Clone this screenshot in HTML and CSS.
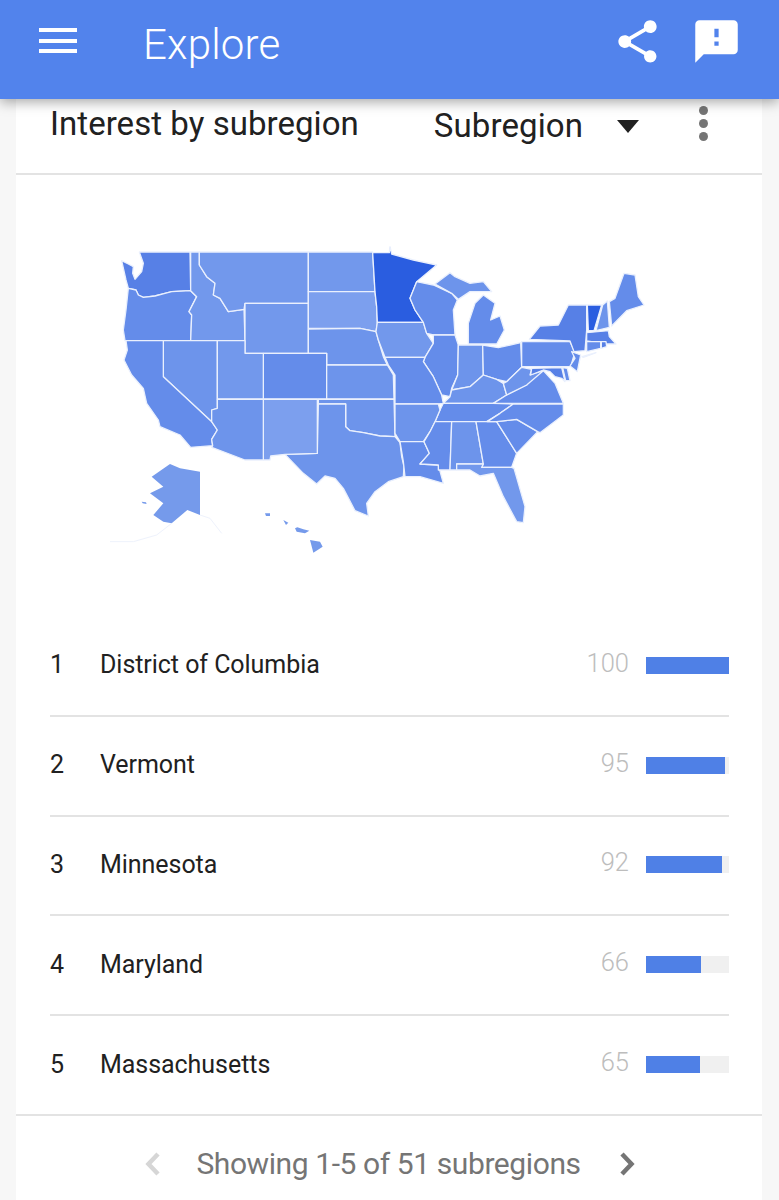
FILE: index.html
```html
<!DOCTYPE html>
<html lang="en">
<head>
<meta charset="utf-8">
<title>Explore</title>
<link rel="stylesheet" href="styles.css">
</head>
<body>
<header class="appbar">
  <button class="menu" aria-label="Menu"><span></span><span></span><span></span></button>
  <h1 class="appbar-title">Explore</h1>
  <div class="appbar-actions">
    <svg class="appbar-icon" viewBox="0 0 24 24"><path d="M18 16.08c-.76 0-1.44.3-1.96.77L8.91 12.7c.05-.23.09-.46.09-.7s-.04-.47-.09-.7l7.05-4.11c.54.5 1.25.81 2.04.81 1.66 0 3-1.34 3-3s-1.34-3-3-3-3 1.34-3 3c0 .24.04.47.09.7L8.04 9.81C7.5 9.31 6.79 9 6 9c-1.66 0-3 1.34-3 3s1.34 3 3 3c.79 0 1.5-.31 2.04-.81l7.12 4.16c-.05.21-.08.43-.08.65 0 1.61 1.31 2.92 2.92 2.92 1.61 0 2.92-1.31 2.92-2.92s-1.31-2.92-2.92-2.92z"/></svg>
    <svg class="appbar-icon" viewBox="0 0 24 24"><path d="M20 2H4c-1.1 0-1.99.9-1.99 2L2 22l4-4h14c1.1 0 2-.9 2-2V4c0-1.1-.9-2-2-2zm-7 12h-2v-2h2v2zm0-4h-2V6h2v4z"/></svg>
  </div>
</header>

<main class="card">
  <div class="card-head">
    <h2 class="card-title">Interest by subregion</h2>
    <div class="select"><span>Subregion</span><i class="caret"></i></div>
    <div class="more"><i></i><i></i><i></i></div>
  </div>

  <div class="map-wrap">
    <svg class="map" viewBox="0 0 1680 960" aria-label="Map of the United States">
      <g class="states">
        <polygon class="s2" points="118,36 270,36 272,152 215,155 195,160 165,168 130,172 115,165 108,150 85,145 78,120 65,62 85,72 100,80 98,100 105,118 125,95 130,70"/>
        <polygon class="s3" points="85,145 108,150 115,165 130,172 165,168 195,160 215,155 272,152 290,170 267,215 275,225 272,302 75,302 70,270 78,210"/>
        <polygon class="s5" points="272,36 298,36 298,75 320,110 345,130 340,165 360,175 385,215 432,208 435,302 272,302 275,225 267,215 290,170 272,152"/>
        <polygon class="s5" points="298,36 625,36 625,190 435,190 432,208 385,215 360,175 340,165 345,130 320,110 298,75"/>
        <polygon class="s5" points="435,190 625,190 625,340 435,340"/>
        <polygon class="s5" points="625,36 818,36 825,155 625,155"/>
        <polygon class="s6" points="625,155 825,155 830,200 832,250 828,275 780,265 625,265"/>
        <polygon class="s4" points="625,267 780,265 828,275 835,300 850,350 862,375 680,375 680,340 625,340"/>
        <polygon class="s3" points="490,340 680,340 680,477 490,477"/>
        <polygon class="s4" points="680,375 862,375 880,405 882,477 680,477"/>
        <polygon class="s4" points="655,478 882,478 885,590 840,588 790,578 750,572 737,560 737,492 655,492"/>
        <polygon class="s4" points="655,492 737,492 737,560 750,572 790,578 840,588 885,590 900,608 905,650 912,680 910,710 865,725 825,755 800,790 805,828 765,812 730,745 705,715 675,708 650,732 610,700 555,643 652,640"/>
        <polygon class="s6" points="490,478 652,478 652,640 555,643 512,648 510,660 490,660"/>
        <polygon class="s4" points="190,302 352,302 352,505 335,510 335,545 190,410"/>
        <polygon class="s3" points="78,302 190,302 190,410 335,545 352,570 335,598 338,617 272,622 240,585 180,560 175,540 140,490 130,445 95,405 72,360 82,330"/>
        <polygon class="s5" points="352,302 435,302 435,340 490,340 490,477 352,477"/>
        <polygon class="s4" points="352,478 490,478 490,660 435,660 335,622 338,617 335,598 352,570 335,545 335,510 352,505"/>
      </g>
      <g class="states east">
        <polygon class="s1" points="8,38 58,38 60,20 65,42 130,60 200,75 140,125 120,175 135,210 160,247 22,247 20,200 15,155"/>
        <polygon class="s5" points="22,247 160,247 170,280 190,310 165,352 45,352 25,300 18,275"/>
        <polygon class="s3" points="140,125 190,135 245,160 262,180 250,210 255,285 190,285 170,280 160,247 135,210 120,175"/>
        <polygon class="s4" points="195,132 240,98 255,110 300,130 340,125 365,155 300,155 265,178 245,160"/>
        <polygon class="s3" points="340,165 375,190 362,240 390,228 403,270 380,312 295,312 295,250 315,190"/>
        <polygon class="s3" points="190,285 255,285 265,315 263,405 245,445 240,470 215,465 190,410 160,365 165,352 190,310"/>
        <polygon class="s4" points="265,315 338,315 340,405 300,440 245,450 263,405"/>
        <polygon class="s3" points="338,315 385,323 452,308 455,382 410,425 380,418 340,405"/>
        <polygon class="s4" points="340,405 380,418 400,430 410,465 370,490 220,490 240,470 245,450 300,440"/>
        <polygon class="s3" points="220,490 370,490 430,492 390,520 350,545 195,545 210,510"/>
        <polygon class="s3" points="45,352 165,352 160,365 190,410 215,465 220,490 205,492 75,492 75,405 55,375"/>
        <polygon class="s4" points="75,492 205,492 210,510 195,545 180,575 160,605 90,605 75,580"/>
        <polygon class="s3" points="90,605 162,605 178,640 150,672 205,675 220,730 150,710 105,710 100,665"/>
        <polygon class="s3" points="195,545 245,545 240,690 205,690 205,675 150,672 178,640 162,605 180,575"/>
        <polygon class="s4" points="245,545 318,545 340,672 260,672 260,690 240,690"/>
        <polygon class="s3" points="318,545 380,545 440,640 425,682 335,682 340,672"/>
        <polygon class="s5" points="260,672 340,672 335,682 425,682 432,685 465,800 460,848 440,845 400,770 370,700 330,708 300,690 260,690"/>
        <polygon class="s3" points="380,545 440,538 503,575 440,640"/>
        <polygon class="s3" points="352,545 390,520 430,492 580,492 580,525 510,578 503,575 440,538 380,545"/>
        <polygon class="s3" points="370,490 410,465 470,435 480,405 520,392 555,430 580,490"/>
        <polygon class="s4" points="400,430 410,425 455,382 485,388 480,405 520,392 470,435 410,465"/>
        <polygon class="s3" points="455,305 600,305 615,335 602,380 455,380"/>
        <polygon class="s2" points="478,298 510,258 565,255 595,195 650,195 650,270 645,332 612,335 600,303"/>
        <polygon class="s2" points="485,385 575,383 585,425 575,415 555,410 540,395 520,390 482,405"/>
        <polygon class="s3" points="578,383 592,385 600,422 587,422"/>
        <polygon class="s3" points="605,335 632,345 622,395 600,378 615,355"/>
        <polygon class="s1" points="652,195 695,195 672,272 655,272"/>
        <polygon class="s4" points="698,195 712,183 718,262 678,272"/>
        <polygon class="s3" points="718,185 735,175 762,100 795,105 805,170 822,195 770,212 725,258"/>
        <polygon class="s2" points="650,278 715,272 718,290 738,312 708,312 650,303"/>
        <polygon class="s3" points="650,305 692,305 692,325 650,335"/>
        <polygon class="s2" points="694,305 708,305 710,320 694,325"/>
        <polygon class="s3" points="636,350 678,338 640,352"/>
      </g>
      <g class="plain">
        <polygon points="210,672 240,685 300,695 300,825 262,810 215,850 190,845 160,825 190,790 150,760 190,740 155,710"/>
        <polygon points="125,785 138,787 140,792 128,790"/>
        <polygon points="585,865 592,862 610,868 628,872 615,880 590,875"/>
        <polygon points="550,840 565,848 558,855"/>
        <polygon points="495,820 510,820 510,828 498,828"/>
        <polygon points="630,900 660,905 668,920 640,938"/>
      </g>
      <g class="faint">
        <polyline points="300,825 330,835 365,880"/>
        <polyline points="215,850 170,885 100,905 30,905"/>
      </g>
    </svg>
  </div>

  <ul class="rows">
    <li class="row"><span class="rank">1</span><span class="name">District of Columbia</span><span class="val">100</span><span class="track"><span class="fill" style="width:100%"></span></span></li>
    <li class="row"><span class="rank">2</span><span class="name">Vermont</span><span class="val">95</span><span class="track"><span class="fill" style="width:95%"></span></span></li>
    <li class="row"><span class="rank">3</span><span class="name">Minnesota</span><span class="val">92</span><span class="track"><span class="fill" style="width:92%"></span></span></li>
    <li class="row"><span class="rank">4</span><span class="name">Maryland</span><span class="val">66</span><span class="track"><span class="fill" style="width:66%"></span></span></li>
    <li class="row"><span class="rank">5</span><span class="name">Massachusetts</span><span class="val">65</span><span class="track"><span class="fill" style="width:65%"></span></span></li>
  </ul>

  <div class="pager">
    <svg class="chev off" viewBox="0 0 16 24"><path d="M14 2 4.500 12 14 22"/></svg>
    <span class="pager-text">Showing 1-5 of 51 subregions</span>
    <svg class="chev" viewBox="0 0 16 24"><path d="M2 2l9.500 10L2 22"/></svg>
  </div>
</main>
</body>
</html>
```
FILE: styles.css
```css
* { box-sizing: border-box; }
html, body { margin: 0; padding: 0; }
body {
  height: 1200px;
  overflow: hidden;
  background: #f7f7f7;
  font-family: Roboto, "Noto Sans", sans-serif;
  color: #212121;
}
.appbar {
  position: relative;
  z-index: 2;
  height: 99px;
  background: #5283ec;
  display: flex;
  align-items: flex-start;
  box-shadow: 0 3px 12px rgba(0, 0, 0, .35);
  color: #fff;
}
.menu {
  margin: 28px 0 0 39px;
  width: 38px;
  height: 25px;
  padding: 0;
  border: 0;
  background: none;
  display: flex;
  flex-direction: column;
  justify-content: space-between;
}
.menu span { display: block; height: 4px; background: #fff; }
.appbar-title {
  margin: 20px 0 0 66px;
  font-size: 42px;
  line-height: 50px;
  font-weight: 300;
  letter-spacing: .2px;
}
.appbar-actions {
  margin: 16px 37px 0 auto;
  display: flex;
  gap: 28px;
}
.appbar-icon { width: 51px; height: 51px; fill: #fff; display: block; }

.card {
  margin: 0 17px 0 16px;
  background: #fff;
}
.card-head {
  height: 76px;
  border-bottom: 2px solid #e3e3e3;
  display: flex;
  align-items: flex-start;
  padding-left: 34px;
  position: relative;
}
.card-title {
  margin: 4px 0 0;
  font-size: 33px;
  line-height: 42px;
  font-weight: 400;
  letter-spacing: .05px;
  white-space: nowrap;
}
.select {
  margin: 6px 0 0 75px;
  display: flex;
  align-items: center;
  font-size: 33px;
  line-height: 42px;
  letter-spacing: .1px;
}
.caret {
  margin-left: 34px;
  width: 0;
  height: 0;
  border-left: 11px solid transparent;
  border-right: 11px solid transparent;
  border-top: 13px solid #212121;
}
.more {
  margin: 7px 0 0 60px;
  display: flex;
  flex-direction: column;
  gap: 4px;
}
.more i { display: block; width: 9px; height: 9px; border-radius: 50%; background: #757575; }

.map-wrap { height: 442px; padding: 65px 0 0 84px; }
.map { display: block; width: 560px; height: 320px; }
.east { transform: translateX(810px); }
.states polygon {
  stroke: #eaf0fd;
  stroke-width: 1.3;
  stroke-linejoin: round;
  vector-effect: non-scaling-stroke;
}
.plain polygon { fill: #759aeb; }
.faint polyline {
  fill: none;
  stroke: #eef2fc;
  stroke-width: 1;
  vector-effect: non-scaling-stroke;
}
.s1 { fill: #2a5de0; }
.s2 { fill: #5780e6; }
.s3 { fill: #648cea; }
.s4 { fill: #6d94eb; }
.s5 { fill: #7298ec; }
.s6 { fill: #7c9fee; }

.rows {
  list-style: none;
  margin: 0;
  padding: 0 33px 0 34px;
  border-bottom: 2px solid #e3e3e3;
}
.row {
  height: 99.75px;
  display: flex;
  align-items: center;
  border-bottom: 2px solid #e3e3e3;
  font-size: 25px;
  padding-bottom: 2px;
}
.row:last-child { height: 98px; border-bottom: 0; }
.rank { width: 50px; }
.name { flex: 1; letter-spacing: -.05px; }
.val { color: #bdbdbd; font-weight: 300; font-size: 25.5px; margin: 0 17px 4px 0; }
.track { display: block; width: 83px; height: 17px; background: #f0f0f0; margin-top: 1px; }
.fill { display: block; height: 100%; background: #4f80e6; }

.pager {
  height: 96px;
  display: flex;
  align-items: center;
  justify-content: center;
  padding: 0 0 1px 2px;
  color: #757575;
}
.pager-text { font-size: 30px; font-weight: 400; margin: 0 39px 0 36px; letter-spacing: -.41px; }
.chev { width: 16px; height: 24px; display: block; fill: none; stroke: #757575; stroke-width: 4.5; }
.chev.off { stroke: #d6d6d6; }
```
